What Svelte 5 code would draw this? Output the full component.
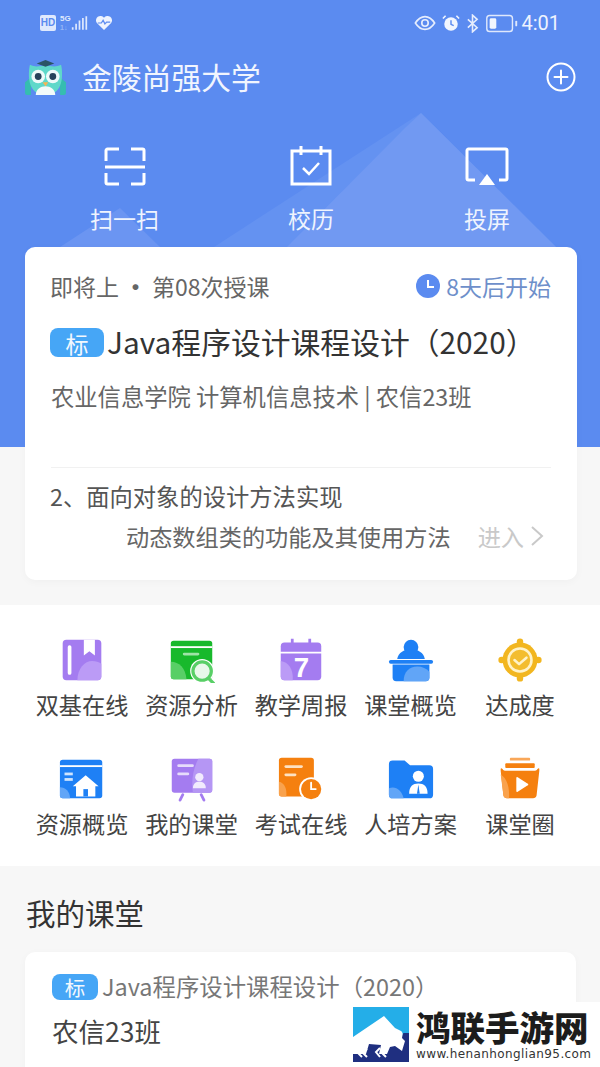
<script>
  const actions = [
    { label: '扫一扫', icon: 'scan' },
    { label: '校历', icon: 'cal' },
    { label: '投屏', icon: 'cast' }
  ];
  const tiles = [
    { label: '双基在线', icon: 'book' },
    { label: '资源分析', icon: 'search' },
    { label: '教学周报', icon: 'week' },
    { label: '课堂概览', icon: 'desk' },
    { label: '达成度', icon: 'target' },
    { label: '资源概览', icon: 'home' },
    { label: '我的课堂', icon: 'board' },
    { label: '考试在线', icon: 'exam' },
    { label: '人培方案', icon: 'folder' },
    { label: '课堂圈', icon: 'play' }
  ];
</script>

{#snippet tileIcon(name)}
  <svg class="tile-icon" viewBox="0 0 50 50" aria-hidden="true">
    {#if name === 'book'}
      <rect x="4" y="3" width="42" height="44" rx="4" fill="#a47cf0" />
      <path d="M27 3h12v17l-6-4.500-6 4.500z" fill="#fff" />
      <rect x="9.500" y="9" width="4" height="32" rx="2" fill="#fff" />
      <path d="M20 47c0-13 8-21 16-21 4 0 7 1 10 3v14a4 4 0 0 1-4 4z" fill="#bb9bf6" />
    {:else if name === 'search'}
      <rect x="2" y="4" width="45" height="42" rx="3" fill="#18b92c" />
      <rect x="2" y="10" width="45" height="2" fill="#fff" />
      <rect x="15" y="17" width="18" height="3" rx="1.500" fill="#9fe3a7" />
      <path d="M2 27c9 0 16 7 17 19H5a3 3 0 0 1-3-3z" fill="#58cf66" />
      <circle cx="36" cy="37" r="13" fill="#fff" />
      <circle cx="36" cy="37" r="10" fill="#e8f8ea" stroke="#58cf66" stroke-width="3.500" />
      <path d="M43 45l6 6" stroke="#58cf66" stroke-width="3.500" stroke-linecap="round" />
    {:else if name === 'week'}
      <path d="M14 2h3v6h-3zM33 2h3v6h-3z" fill="#a47cf0" />
      <path d="M3 10a4 4 0 0 1 4-4h36a4 4 0 0 1 4 4v6H3z" fill="#a47cf0" />
      <path d="M3 18h44v25a4 4 0 0 1-4 4H7a4 4 0 0 1-4-4z" fill="#a47cf0" />
      <path d="M3 26c8 1 14 9 13 21H7a4 4 0 0 1-4-4z" fill="#bb9bf6" />
      <text class="seven" x="17" y="44">7</text>
    {:else if name === 'desk'}
      <circle cx="25" cy="11" r="8" fill="#1e80f5" />
      <path d="M10 24c1-7 8-11 15-11s14 4 15 11z" fill="#1e80f5" />
      <rect x="1" y="25" width="48" height="4" rx="2" fill="#1e80f5" />
      <path d="M5 30h40v14a4 4 0 0 1-4 4H9a4 4 0 0 1-4-4z" fill="#1e80f5" />
      <path d="M17 48c0-10 6-16 15-16 5 0 10 2 13 6v6a4 4 0 0 1-4 4z" fill="#61a5f7" />
    {:else if name === 'target'}
      <circle cx="25" cy="25" r="19" fill="#f2b61f" />
      <circle cx="25" cy="5" r="3.500" fill="#f2b61f" />
      <circle cx="25" cy="45" r="3.500" fill="#f2b61f" />
      <circle cx="5" cy="25" r="3.500" fill="#f2b61f" />
      <circle cx="45" cy="25" r="3.500" fill="#f2b61f" />
      <circle cx="25" cy="25" r="12.500" fill="#f3bd2f" stroke="#fff3c9" stroke-width="2.800" />
      <path d="M19 25l5 4.500 8-7" fill="none" stroke="#fff3c9" stroke-width="2.800" stroke-linecap="round" stroke-linejoin="round" />
    {:else if name === 'home'}
      <rect x="1" y="4" width="46" height="42" rx="3" fill="#1e80f5" />
      <rect x="1" y="10" width="46" height="2" fill="#fff" />
      <rect x="6" y="18" width="9" height="3" fill="#cfe4fd" />
      <rect x="6" y="24" width="9" height="3" fill="#cfe4fd" />
      <path d="M1 34c6 0 11 5 11 12H4a3 3 0 0 1-3-3z" fill="#61a5f7" />
      <path d="M29 21l14 12h-3.500v11h-21V33H15z" fill="#fff" />
      <rect x="26.500" y="36" width="5" height="8" fill="#1e80f5" />
    {:else if name === 'board'}
      <rect x="3" y="3" width="44" height="37" rx="3" fill="#a47cf0" />
      <path d="M32 3h12a3 3 0 0 1 3 3v31a3 3 0 0 1-3 3H26c-2-12 0-26 6-37z" fill="#b596f4" />
      <rect x="9" y="9" width="18" height="3" rx="1.500" fill="#e6dcfb" />
      <rect x="9" y="18" width="13" height="3" rx="1.500" fill="#e6dcfb" />
      <circle cx="33" cy="23" r="4.500" fill="#f1ebfd" />
      <path d="M26 35c0-5 3-7 7-7s7 2 7 7z" fill="#f1ebfd" />
      <path d="M15 42l-3 6M35 42l3 6" stroke="#a47cf0" stroke-width="3" stroke-linecap="round" />
    {:else if name === 'exam'}
      <rect x="1" y="2" width="38" height="42" rx="3" fill="#f5800f" />
      <rect x="7" y="10" width="20" height="3" rx="1.500" fill="#fde1c2" />
      <rect x="7" y="19" width="13" height="3" rx="1.500" fill="#fde1c2" />
      <path d="M1 28c6 1 9 8 8 16H4a3 3 0 0 1-3-3z" fill="#f9a24d" />
      <circle cx="36" cy="36" r="13" fill="#fff" />
      <circle cx="36" cy="36" r="11" fill="#f5800f" />
      <path d="M36 29v7h5" fill="none" stroke="#fff" stroke-width="2" stroke-linecap="round" />
    {:else if name === 'folder'}
      <path d="M1 9a4 4 0 0 1 4-4h13l6 5h21a4 4 0 0 1 4 4v28a4 4 0 0 1-4 4H5a4 4 0 0 1-4-4z" fill="#1e80f5" />
      <path d="M1 35c7-3 14 2 16 11H5a4 4 0 0 1-4-4z" fill="#61a5f7" />
      <circle cx="33" cy="22" r="6" fill="#fff" />
      <path d="M23 41c0-8 4-11 10-11s10 3 10 11z" fill="#fff" />
      <path d="M33 31l-1.500 10h3z" fill="#1e80f5" />
    {:else if name === 'play'}
      <rect x="14" y="2" width="22" height="3" rx="1" fill="#f9a759" />
      <rect x="9" y="8" width="32" height="5" rx="1" fill="#f5800f" />
      <path d="M4 14c0-1 1-1 2 0 1 2 2 2 4 2h30c2 0 3 0 4-2 1-1 2-1 2 0v2l-3 27a4 4 0 0 1-4 3H11a4 4 0 0 1-4-3L4 16z" fill="#f5800f" />
      <path d="M4 20c7 4 10 15 9 26h-2a4 4 0 0 1-4-3z" fill="#f9a24d" />
      <path d="M21 24v14a1 1 0 0 0 1.500.8L33 32a1 1 0 0 0 0-2l-10.500-6.800A1 1 0 0 0 21 24z" fill="#fff" />
    {/if}
  </svg>
{/snippet}

<div class="page">
  <section class="hero">
    <svg class="peaks" viewBox="0 0 600 447" aria-hidden="true">
      <path d="M214 247L421 113l135 134z" fill="#6492f1" />
      <path d="M287 247L405 128l16-15 135 134z" fill="#7199f2" />
      <path d="M60 247l60-39 40 39z" fill="#6b95f2" />
    </svg>

    <div class="status">
      <div class="status-side">
        <span class="hd">HD</span>
        <span class="net"><b>5G</b><i>1↓</i></span>
        <svg class="bars" viewBox="0 0 20 20" aria-hidden="true">
          <path d="M1 15h2v3H1zM5 11h2v7H5zM9 7h2v11H9zM13 4h2v14h-2zM17 2h2v16h-2z" fill="#dfe9fd" />
        </svg>
        <svg class="heart" viewBox="0 0 20 18" aria-hidden="true">
          <path d="M10 17L2 9a5 5 0 0 1 8-6 5 5 0 0 1 8 6z" fill="#eef3fe" />
          <path d="M3 9h4l2-3 2 4 2-2h4" fill="none" stroke="#5b8bf0" stroke-width="1.400" />
        </svg>
      </div>
      <div class="status-side right">
        <svg class="s-eye" viewBox="0 0 24 16" aria-hidden="true">
          <path d="M1.500 8C5 2.500 8.500 1 12 1s7 1.500 10.500 7C19 13.500 15.500 15 12 15S5 13.500 1.500 8z" fill="none" stroke="#e6edfd" stroke-width="1.800" />
          <circle cx="12" cy="8" r="3.500" fill="none" stroke="#e6edfd" stroke-width="1.800" />
        </svg>
        <svg class="s-alarm" viewBox="0 0 20 20" aria-hidden="true">
          <circle cx="10" cy="11" r="7.500" fill="#f2f6fe" />
          <path d="M10 7v4.500l3 1.500" fill="none" stroke="#5b8bf0" stroke-width="1.600" />
          <path d="M1 5l3-3M19 5l-3-3" stroke="#f2f6fe" stroke-width="1.800" />
        </svg>
        <svg class="s-bt" viewBox="0 0 14 20" aria-hidden="true">
          <path d="M2 5.500l10 9-5 4.500V1l5 4.500-10 9" fill="none" stroke="#e6edfd" stroke-width="1.700" />
        </svg>
        <svg class="s-bat" viewBox="0 0 34 20" aria-hidden="true">
          <rect x="1" y="1.500" width="27" height="17" rx="3" fill="none" stroke="#dfe8fc" stroke-width="1.500" />
          <rect x="4" y="4.500" width="7" height="11" rx="1.500" fill="#f2f6fe" />
          <rect x="31" y="7" width="2" height="6" rx="1" fill="#dfe8fc" />
        </svg>
        <span class="time">4:01</span>
      </div>
    </div>

    <header class="topbar">
      <svg class="owl" viewBox="0 0 42 38" aria-hidden="true">
        <path d="M0 24l6-5v18H2a2 2 0 0 1-2-2zM42 24l-6-5v18h4a2 2 0 0 0 2-2z" fill="#35bdb0" />
        <path d="M5 6c6 3 10 1 16 1s10 2 16-1c2 9 3 31-16 31S3 15 5 6z" fill="#5fd8ca" />
        <path d="M21 1l9 3.500-9 3.500-9-3.500z" fill="#2b5566" />
        <circle cx="13.500" cy="18" r="7" fill="#eefafa" />
        <circle cx="28.500" cy="18" r="7" fill="#eefafa" />
        <circle cx="13.500" cy="18" r="3.500" fill="#27425a" />
        <circle cx="28.500" cy="18" r="3.500" fill="#27425a" />
        <path d="M18 24h6l-3 4z" fill="#f6b455" />
        <path d="M11 37c0-6 5-9 10-9s10 3 10 9z" fill="#f3fbfa" />
      </svg>
      <h1>金陵尚强大学</h1>
      <svg class="plus" viewBox="0 0 30 30" aria-hidden="true">
        <circle cx="15" cy="15" r="13.500" fill="none" stroke="#fff" stroke-width="2" />
        <path d="M15 8.500v13M8.500 15h13" stroke="#fff" stroke-width="2" stroke-linecap="round" />
      </svg>
    </header>

    <nav class="actions">
      {#each actions as a}
        <div class="action">
          <svg class="action-icon" viewBox="0 0 48 40" aria-hidden="true">
            {#if a.icon === 'scan'}
              <path d="M18 3H6.500A1.500 1.500 0 0 0 5 4.500V15M30 3h11.500A1.500 1.500 0 0 1 43 4.500V15M18 38H6.500A1.500 1.500 0 0 1 5 36.500V27M30 38h11.500a1.500 1.500 0 0 0 1.500-1.500V27" fill="none" stroke="#fff" stroke-width="3" />
              <path d="M4 21h40" stroke="#fff" stroke-width="3" />
            {:else if a.icon === 'cal'}
              <path d="M5 5h38v33H5z" fill="none" stroke="#fff" stroke-width="3" />
              <path d="M14 0v9M34 0v9" stroke="#fff" stroke-width="3" />
              <path d="M16 22l6 6 10-11" fill="none" stroke="#fff" stroke-width="2.500" />
            {:else}
              <path d="M12 34H5.500A1.500 1.500 0 0 1 4 32.500V4.500A1.500 1.500 0 0 1 5.500 3h37A1.500 1.500 0 0 1 44 4.500v28a1.500 1.500 0 0 1-1.500 1.500H36" fill="none" stroke="#fff" stroke-width="3" />
              <path d="M24 28l8 11H16z" fill="#fff" />
            {/if}
          </svg>
          <span>{a.label}</span>
        </div>
      {/each}
    </nav>
  </section>

  <article class="lesson">
    <div class="lesson-top">
      <span class="when">即将上<i>·</i>第08次授课</span>
      <span class="soon">
        <svg class="clock" viewBox="0 0 24 24" aria-hidden="true">
          <circle cx="12" cy="12" r="12" fill="#5b8bf0" />
          <path d="M12 6v7h6" fill="none" stroke="#fff" stroke-width="2" />
        </svg>
        8天后开始
      </span>
    </div>
    <div class="lesson-title">
      <span class="tag">标</span>
      <span class="name">Java程序设计课程设计（2020）</span>
    </div>
    <p class="lesson-sub">农业信息学院 计算机信息技术 | 农信23班</p>
    <div class="lesson-foot">
      <p class="chapter">2、面向对象的设计方法实现</p>
      <div class="next">
        <span class="topic">动态数组类的功能及其使用方法</span>
        <span class="enter">进入</span>
        <svg class="chev" viewBox="0 0 16 22" aria-hidden="true">
          <path d="M3 2l10 9-10 9" fill="none" stroke="#c9c9c9" stroke-width="2" />
        </svg>
      </div>
    </div>
  </article>

  <section class="tiles">
    {#each tiles as t}
      <div class="tile">
        {@render tileIcon(t.icon)}
        <span>{t.label}</span>
      </div>
    {/each}
  </section>

  <h2>我的课堂</h2>

  <article class="course">
    <div class="course-title">
      <span class="tag small">标</span>
      <span class="name">Java程序设计课程设计（2020）</span>
    </div>
    <p class="course-class">农信23班</p>
  </article>

  <aside class="mark">
    <svg class="mark-logo" viewBox="0 0 56 55" aria-hidden="true">
      <rect width="56" height="55" fill="#1f2f80" />
      <path d="M0 0h56v26H50l-2 6-6-4L0 36z" fill="#24aee8" />
      <path d="M0 30L31 9l11 12 8 4-1 6 3 3-3 10-7-5-5 1-3 7H26l2-9-12-1-3 10H0z" fill="#fff" />
      <path d="M50 12c-2 5 0 7 2 10l-2 5-3-6c-1-4 1-7 3-9z" fill="#24aee8" />
      <path d="M14 42l-4 4 4 4M9 42l-4 4 4 4M33 40l-5 5 5 5M27 41l-4 4 4 5" fill="none" stroke="#fff" stroke-width="2" />
    </svg>
    <div class="mark-text">
      <strong>鸿联手游网</strong>
      <small>www.henanhonglian95.com</small>
    </div>
  </aside>
</div>

<style>
  :global(body) {
    margin: 0;
    background: #f6f6f6;
  }
  .page {
    position: relative;
    width: 600px;
    height: 1067px;
    overflow: hidden;
    background: #f7f7f7;
    font-family: "Noto Sans CJK SC", "Noto Sans", sans-serif;
    color: #333;
  }
  p, h1, h2 {
    margin: 0;
    font-weight: 400;
  }

  .hero {
    position: relative;
    height: 447px;
    background: #5b8bf0;
    color: #fff;
  }
  .peaks {
    position: absolute;
    inset: 0;
    width: 600px;
    height: 447px;
  }
  .status {
    position: relative;
    display: flex;
    justify-content: space-between;
    align-items: center;
    height: 46px;
    padding: 0 40px;
  }
  .status-side {
    display: flex;
    align-items: center;
    gap: 4px;
  }
  .status-side.right {
    gap: 6px;
  }
  .hd {
    width: 16px;
    height: 16px;
    border-radius: 2px;
    background: #dfe9fd;
    color: #5b8bf0;
    font: 700 10px/16px "Liberation Sans", sans-serif;
    text-align: center;
  }
  .net {
    display: flex;
    flex-direction: column;
    margin-right: -4px;
    font: 700 8px/9px "Liberation Sans", sans-serif;
    color: #dfe9fd;
  }
  .net b {
    font-weight: 700;
  }
  .net i {
    font-style: normal;
    font-size: 7px;
    opacity: 0.45;
  }
  .bars { width: 17px; height: 20px; }
  .heart { width: 18px; height: 16px; margin-left: 3px; }
  .s-eye { width: 22px; height: 16px; }
  .s-alarm { width: 18px; height: 18px; }
  .s-bt { width: 13px; height: 19px; }
  .s-bat { width: 34px; height: 19px; margin-right: -4px; }
  .time {
    font: 400 20px/24px Roboto, sans-serif;
    color: #eef3fe;
  }

  .topbar {
    position: relative;
    display: flex;
    align-items: center;
    height: 62px;
    padding: 0 25px;
  }
  .owl {
    width: 41px;
    height: 37px;
    margin-right: 16px;
    flex: none;
  }
  h1 {
    flex: 1;
    margin-top: -3px;
    font-size: 29.800px;
    line-height: 40px;
    color: #f1f5fe;
  }
  .plus {
    width: 30px;
    height: 30px;
    margin-right: -1px;
  }

  .actions {
    position: relative;
    display: flex;
    justify-content: space-between;
    padding: 38px 89px 0 90px;
  }
  .action {
    display: flex;
    flex-direction: column;
    align-items: center;
    gap: 17px;
  }
  .action-icon {
    width: 48px;
    height: 40px;
  }
  .action span {
    font-size: 23px;
    line-height: 30px;
    color: #eff4fe;
  }

  .lesson {
    position: relative;
    box-sizing: border-box;
    width: 552px;
    height: 333px;
    margin: -200px 0 0 25px;
    padding: 0 26px;
    background: #fff;
    border-radius: 10px;
    box-shadow: 0 2px 8px rgba(0, 0, 0, 0.03);
  }
  .lesson-top {
    display: flex;
    justify-content: space-between;
    align-items: center;
    height: 30px;
    padding-top: 24px;
    font-size: 23px;
    color: #666;
  }
  .when {
    margin-left: -1px;
  }
  .when i {
    margin: 0 5px;
    font-style: normal;
    font-weight: 700;
  }
  .soon {
    display: flex;
    align-items: center;
    gap: 6px;
    color: #6e8fca;
  }
  .clock {
    width: 24px;
    height: 24px;
  }
  .lesson-title {
    display: flex;
    align-items: center;
    gap: 3px;
    margin: 24px 0 0 -1px;
    height: 34px;
    font-size: 29.800px;
    white-space: nowrap;
    color: #333;
  }
  .name {
    margin-top: -3px;
  }
  .tag {
    flex: none;
    width: 54px;
    height: 29px;
    border-radius: 8px;
    background: #46a6f6;
    color: #f2f8fe;
    font-size: 23px;
    line-height: 31px;
    text-align: center;
  }
  .tag.small {
    width: 46px;
    height: 26px;
    font-size: 20.500px;
    line-height: 27px;
  }
  .lesson-sub {
    margin-top: 22px;
    font-size: 23.300px;
    line-height: 30px;
    color: #666;
  }
  .lesson-foot {
    margin-top: 56px;
    border-top: 1px solid #f1f1f1;
  }
  .chapter {
    margin: 13px 0 0 -1px;
    font-size: 23.300px;
    line-height: 30px;
    color: #555;
  }
  .next {
    display: flex;
    align-items: center;
    margin-top: 10px;
    padding-left: 75px;
    height: 30px;
    font-size: 23.200px;
    color: #666;
  }
  .topic {
    white-space: nowrap;
  }
  .enter {
    margin-left: 27px;
    color: #c9c9c9;
  }
  .chev {
    width: 16px;
    height: 22px;
    margin-left: 5px;
  }

  .tiles {
    display: grid;
    grid-template-columns: repeat(5, 109.500px);
    justify-content: center;
    box-sizing: border-box;
    height: 261px;
    margin-top: 25px;
    padding: 32px 0 0 2px;
    background: #fff;
    grid-auto-rows: 119px;
  }
  .tile {
    display: flex;
    flex-direction: column;
    align-items: center;
    gap: 5px;
  }
  .tile-icon {
    width: 46px;
    height: 46px;
    flex: none;
  }
  .tile span {
    font-size: 23.200px;
    line-height: 32px;
    white-space: nowrap;
    color: #444;
  }
  .seven {
    font: 700 30px "Liberation Sans", sans-serif;
    fill: #fff;
  }

  h2 {
    margin: 27px 0 0 26px;
    height: 38px;
    font-size: 29.500px;
    line-height: 38px;
    color: #333;
  }
  .course {
    box-sizing: border-box;
    width: 551px;
    height: 150px;
    margin: 21px 0 0 25px;
    padding: 22px 27px;
    background: #fff;
    border-radius: 10px;
    box-shadow: 0 2px 8px rgba(0, 0, 0, 0.03);
  }
  .course-title {
    display: flex;
    align-items: center;
    gap: 4px;
    height: 26px;
    font-size: 23.400px;
    line-height: 26px;
    white-space: nowrap;
    color: #777;
  }
  .course-class {
    margin-top: 12px;
    font-size: 26.500px;
    line-height: 38px;
    color: #444;
  }

  .mark {
    position: absolute;
    right: 0;
    bottom: 0;
    display: flex;
    align-items: center;
    gap: 7px;
    box-sizing: border-box;
    width: 255px;
    height: 65px;
    padding: 0 8px;
    background: #fff;
  }
  .mark-logo {
    width: 56px;
    height: 55px;
    flex: none;
  }
  .mark-text {
    display: flex;
    flex-direction: column;
    gap: 3px;
    white-space: nowrap;
  }
  .mark-text strong {
    font-size: 34.500px;
    line-height: 36px;
    font-weight: 900;
    color: #1c1c1c;
  }
  .mark-text small {
    font: 400 12px/14px "DejaVu Sans", sans-serif;
    letter-spacing: 0.400px;
    color: #333;
  }
</style>
